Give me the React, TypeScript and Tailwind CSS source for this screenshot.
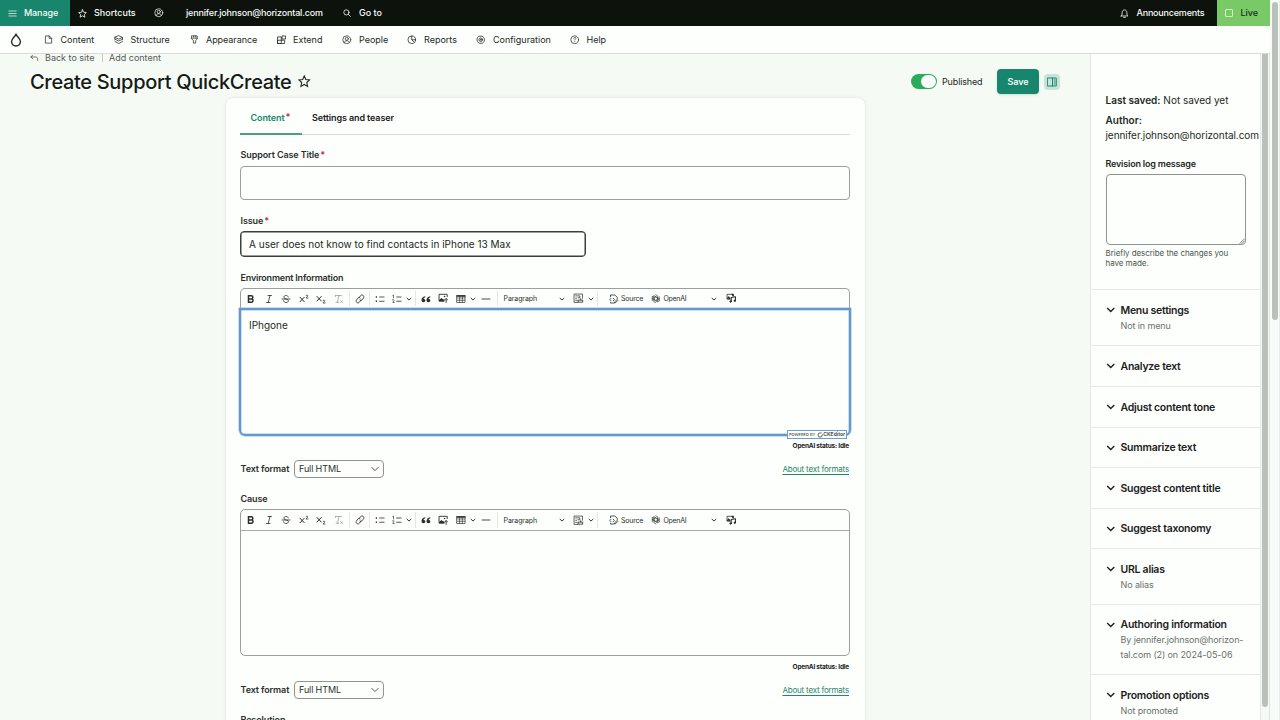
import React from "react";

type IconProps = { className?: string };

function Glyph({ className = "size-[10px]", box = 20, width = 1.6, children }: { className?: string; box?: number; width?: number; children: React.ReactNode }) {
  return (
    <svg viewBox={`0 0 ${box} ${box}`} className={`shrink-0 ${className}`} fill="none" stroke="currentColor" strokeWidth={width} strokeLinecap="round" strokeLinejoin="round">
      {children}
    </svg>
  );
}

const MenuIcon = () => <Glyph className="ml-px size-[9px]"><path d="M1 4.500h18M1 10h18M1 15.500h18" strokeLinecap="butt" /></Glyph>;
const StarIcon = ({ className }: IconProps) => (
  <Glyph className={className} width={1.8}><path d="M10 1.600l2.500 5.600 6 .7-4.400 4.200 1.200 6.100L10 15.200l-5.300 3 1.200-6.100L1.500 7.900l6-.7z" strokeLinejoin="miter" /></Glyph>
);
const UserIcon = () => (
  <Glyph className="size-[9.500px]" width={1.500}><circle cx="10" cy="10" r="8.400" /><circle cx="10" cy="8" r="3.300" /><path d="M4.500 16c.6-2.600 2.600-4 5.500-4s4.900 1.400 5.500 4" /></Glyph>
);
const SearchIcon = () => <Glyph className="ml-px size-[8px]" width={2}><circle cx="8.500" cy="8.500" r="6.500" /><path d="M13.500 13.500l5 5" /></Glyph>;
const BellIcon = () => <Glyph className="size-[9px]" width={1.800}><path d="M2.500 15.500h15c-1.700-1.500-2.200-3-2.200-7C15.300 4.500 13 2 10 2S4.700 4.500 4.700 8.500c0 4-.5 5.500-2.200 7zM8 18.500h4" /></Glyph>;
const FileIcon = () => <Glyph className="ml-[0.500px] size-[9px]" width={1.600}><path d="M4 2h7.500L17 7.500V18H4zM11.500 2v5.500H17" /></Glyph>;
const StackIcon = () => <Glyph className="ml-[0.500px] size-[9.500px]" width={1.600}><path d="M10 1.500l8 3.600-8 3.600-8-3.600zM2 9l8 3.600L18 9M2 13.500l8 4.500 8-4.500M2 5.500V9M18 5.500V9" /></Glyph>;
const BrushIcon = () => <Glyph className="ml-[0.500px] size-[9px]" width={1.600}><path d="M4 2h12v7l-3.500 3v6h-5v-6L4 9zM4 7h12M8 2v2.500M12 2v2.500" /></Glyph>;
const BlocksIcon = () => <Glyph className="ml-[0.500px] size-[9.500px]" width={1.700}><path d="M2 4h7v14H2zM2 11h14v7H2zM11.500 2h6.500v6.500h-6.500z" /></Glyph>;
const PieIcon = () => <Glyph className="size-[9.500px]" width={1.600}><circle cx="10" cy="10" r="8" /><path d="M10 2v8h8M10 10l5 5" /></Glyph>;
const GearIcon = () => (
  <Glyph className="size-[9.500px]" width={1.600}><path d="M7 2.500h6l4 3.500 1 4-1 4-4 3.500H7L3 14l-1-4 1-4z" /><circle cx="10" cy="10" r="3.800" /><circle cx="10" cy="10" r="1" /></Glyph>
);
const HelpIcon = () => <Glyph className="size-[9.500px]" width={1.500}><circle cx="10" cy="10" r="8.300" /><path d="M7.800 7c.2-1.400 1.100-2 2.300-2s2.300.8 2.300 2c0 1.700-2.300 1.800-2.300 3.600M10 14v.3" /></Glyph>;
const Chevron = ({ className = "size-[6px]", width = 3.200 }: IconProps & { width?: number }) => (
  <Glyph className={className} width={width}><path d="M2.500 6.500l7.500 7 7.500-7" strokeLinecap="butt" strokeLinejoin="miter" /></Glyph>
);

function NavItem({ icon, label, className }: { icon: React.ReactNode; label: string; className: string }) {
  return (
    <a className={`flex shrink-0 items-center whitespace-nowrap ${className}`}>
      <span className="flex w-[17px] shrink-0">{icon}</span>
      {label}
    </a>
  );
}

function Required() {
  return <span className="ml-[1px] inline-block -translate-y-[1px] text-[9px] leading-none font-bold tracking-normal text-[#c8324b]">*</span>;
}

function Label({ children, required = false, className = "tracking-[-0.110px]" }: { children: React.ReactNode; required?: boolean; className?: string }) {
  return (
    <div className={`flex h-[12px] items-center text-[9px] font-semibold whitespace-nowrap text-[#2b312d] ${className}`}>
      {children}
      {required && <Required />}
    </div>
  );
}

const Sep = ({ className = "w-[4px]" }: IconProps) => (
  <span className={`flex h-full shrink-0 justify-center py-[2px] ${className}`}><span className="w-px bg-[#e2e8e2]" /></span>
);

function Cell({ className = "w-[17.5px]", children }: { className?: string; children: React.ReactNode }) {
  return <span className={`flex h-full shrink-0 items-center justify-center ${className}`}>{children}</span>;
}

function Toolbar() {
  return (
    <div className="flex h-full items-center pl-[1.500px] text-[7px] whitespace-nowrap text-[#2a2f2b]">
      <Cell><Glyph width={3}><path d="M5 3.500h5.500a3.200 3.200 0 0 1 0 6.400H5zM5 9.900h6.500a3.400 3.400 0 0 1 0 6.600H5z" strokeLinejoin="miter" /></Glyph></Cell>
      <Cell><Glyph><path d="M8 3h7M5 17h7M12 3L8.500 17" /></Glyph></Cell>
      <Cell><Glyph><path d="M14.500 6c-.3-2-2-3-4.300-3-2.600 0-4.400 1.300-4.400 3.300 0 5 9 2.700 9 7.200 0 2-1.900 3.500-4.800 3.500-2.700 0-4.500-1.300-4.800-3.500M2 10h16" /></Glyph></Cell>
      <Cell><Glyph width={2}><path d="M2 6.500l8.500 9M10.500 6.500L2 15.500" /><path d="M14 3.300c.5-1.500 3.700-1.400 3.700.5 0 1.400-3.700 2.500-3.700 4.200h4" strokeWidth={1.500} /></Glyph></Cell>
      <Cell><Glyph width={2}><path d="M2 5l8.500 9M10.500 5L2 14" /><path d="M14 13.300c.5-1.500 3.700-1.400 3.700.5 0 1.400-3.700 2.500-3.700 4.200h4" strokeWidth={1.500} /></Glyph></Cell>
      <Cell><Glyph className="size-[10px] text-[#9ba19c]"><path d="M3 3h12M3 3v2M10 3L7 16.500M4 16.500h5.500M13.500 13.500l3.500 3.500M17 13.500l-3.500 3.500" /></Glyph></Cell>
      <Sep />
      <Cell className="w-[16px]"><Glyph width={1.700}><path d="M8 7.500l3-4c1.500-2 4-2 5.500-.5s1.600 3.500.2 5.300l-2.200 3c-1 1.400-3 1.700-4.500.9M12 12l-3 4.300c-1.500 2-4 2-5.500.5s-1.600-3.500-.2-5.300L5.500 8.500C6.500 7 8.500 6.800 10 7.600" /></Glyph></Cell>
      <Sep />
      <Cell className="w-[16px]"><Glyph width={1.600}><path d="M8.500 6H19M8.500 14.500H19" strokeLinecap="butt" /><path d="M1.500 6h2.500M1.500 14.500h2.500" strokeWidth={3} strokeLinecap="butt" /></Glyph></Cell>
      <Cell className="w-[18px]"><Glyph width={1.600}><path d="M8.500 6H19M8.500 14.500H19" strokeLinecap="butt" /><path d="M1.500 3l1.500-.8V8M1 11.500c2.500-1 4 .7 2.500 2.300L1.500 17H4.500" strokeWidth={1.300} /></Glyph></Cell>
      <Cell className="w-[7px]"><Chevron /></Cell>
      <Sep className="w-[5px]" />
      <Cell className="w-[17px]"><Glyph width={0}><path fill="currentColor" d="M8.500 4.500C4 5 1 8.500 1 12.500 1 15 2.600 16.500 4.800 16.500S8.700 15 8.700 13 7.200 9.800 5.200 9.800C5.500 8.500 6.800 7.200 8.800 6.600zM18.500 4.500C14 5 11 8.500 11 12.500c0 2.500 1.600 4 3.800 4s3.900-1.500 3.900-3.500-1.500-3.200-3.500-3.200c.3-1.300 1.600-2.600 3.600-3.200z" /></Glyph></Cell>
      <Cell className="w-[17px]"><Glyph className="size-[10.500px]" width={1.700}><path d="M11.500 15.500H2v-13h15.500V7M15.500 18v-7M12.500 13.500l3-3 3 3" /><path d="M2 13.500L6.500 9.500l3.500 3L12 11.500V15.500H2z" fill="currentColor" strokeWidth={0} /><circle cx="12.500" cy="6.500" r="1.500" fill="currentColor" strokeWidth={0} /></Glyph></Cell>
      <Cell className="w-[18px]"><Glyph width={1.300}><path d="M2 3h16v14H2zM2 8h16M2 12.500h16M7.300 4v13M12.700 4v13" /><path d="M2 4h16" strokeWidth={3} /></Glyph></Cell>
      <Cell className="w-[7px]"><Chevron /></Cell>
      <Cell className="w-[19px]"><Glyph width={1.700}><path d="M2 10h16" /></Glyph></Cell>
      <Sep />
      <span className="w-[58px] shrink-0 pt-[1.500px] pl-[4px] tracking-[-0.080px]">Paragraph</span>
      <Cell className="w-[8px]"><Chevron /></Cell>
      <Cell className="ml-[5px] w-[16px]"><Glyph className="size-[10.500px]" width={1.400}><path d="M9 18H2V2h16v8M5 5.500h3M5 10h2M5 14h3M9.500 5.500H13v3.500H9.500" /><path d="M10.500 13.500h8v4h-8zM14.500 13v-2" strokeWidth={1.600} /></Glyph></Cell>
      <Cell className="w-[8px]"><Chevron /></Cell>
      <Sep className="w-[6px]" />
      <Cell className="ml-[7px] w-[12px]"><Glyph className="size-[10px]" width={1.600}><path d="M3 5.500V2h8.500l5 4.500V9M4 8.500l-2.500 2.500L4 13.500M8.500 8.500l2.500 2.500-2.500 2.500M3 16.500V18h6.500M17 11.500l1 1-5 5-2 .5.500-2z" /></Glyph></Cell>
      <span className="w-[31px] shrink-0 pt-[1.500px] pl-[1.500px] tracking-[-0.200px]">Source</span>
      <Cell className="w-[11px]"><Glyph className="size-[9.500px]" width={1.300}><path d="M10 1.500l4 2.300v7l-4 2.400-4-2.400v-6M10 18.500l-4-2.300v-7l4-2.400 4 2.400v6M2.600 5.800l4-2.300 6 3.500M17.400 14.200l-4 2.300-6-3.500M2.600 14.200V9.600l6-3.500M17.400 5.800v4.600l-6 3.500M2.600 5.800v4.500l4 2.300M17.400 14.200V9.700l-4-2.300" /></Glyph></Cell>
      <span className="w-[48px] shrink-0 pt-[1.500px] pl-[2px] tracking-[-0.300px]">OpenAI</span>
      <Cell className="w-[8px]"><Chevron /></Cell>
      <Cell className="ml-[5px] w-[17px]"><Glyph className="size-[10.500px]" width={1.500}><path d="M7 11.500H2v-9h11.500V5" /><path d="M2 10.500l3-4 3 3v2z" fill="currentColor" strokeWidth={1} /><path d="M10 16V8.500L18 7v7.500" strokeWidth={2} /><path d="M12 3h1.500v2" strokeWidth={3} /><circle cx="8.700" cy="16.200" r="1.500" fill="currentColor" /><circle cx="16.700" cy="14.700" r="1.500" fill="currentColor" /></Glyph></Cell>
    </div>
  );
}

function FormatRow() {
  return (
    <div className="flex h-[18px] items-center whitespace-nowrap">
      <span className="w-[54px] text-[9px] font-semibold tracking-[-0.110px] text-[#2b312d]">Text format</span>
      <div className="-ml-[0.500px] flex h-[18px] w-[90px] items-center justify-between rounded-[4px] border border-[#8e948f] pr-[4px] pl-[4px] text-[9px] tracking-[-0.120px] text-[#2b312d]">
        Full HTML
        <Glyph className="size-[8px]" width={2}><path d="M2 6l8 8 8-8" /></Glyph>
      </div>
      <a className="mr-[1px] ml-auto text-[8px] tracking-[-0.200px] text-[#26856b] underline underline-offset-[1.500px]">About text formats</a>
    </div>
  );
}

function Panel({ title, lines = [], className }: { title: string; lines?: string[]; className: string }) {
  return (
    <section className={`flex shrink-0 border-t border-[#e6ebe6] pt-[13.500px] pl-[15px] ${className}`}>
      <Chevron className="mt-[1.500px] mr-[5px] size-[9.500px] text-[#1c211e]" width={3} />
      <div className="whitespace-nowrap">
        <h3 className="text-[10.500px] leading-[13px] font-semibold tracking-[-0.260px] text-[#1c211e]">{title}</h3>
        {lines.map((line) => <p key={line} className="text-[9px] leading-[14.600px] tracking-[-0.110px] text-[#6a716c] first-of-type:mt-[2.300px]">{line}</p>)}
      </div>
    </section>
  );
}

export default function App() {
  return (
    <div className="flex h-[720px] w-[1280px] overflow-hidden bg-[#f6faf6] font-['Inter','Liberation_Sans',sans-serif] text-[#232925]">
      <div className="flex w-[1270px] flex-col">
        <header className="flex h-[26px] shrink-0 bg-[#0d120d] text-[9px] font-medium text-[#f8fcf8]">
          <div className="flex w-[70px] items-center bg-[#18866d] pl-[7px] tracking-[-0.100px]"><NavItem icon={<MenuIcon />} label="Manage" className="" /></div>
          <NavItem icon={<StarIcon className="ml-[0.500px] size-[9px]" />} label="Shortcuts" className="ml-[7px] w-[77px]" />
          <span className="flex w-[32px] items-center"><UserIcon /></span>
          <span className="flex w-[156px] items-center tracking-[-0.170px] whitespace-nowrap">jennifer.johnson@horizontal.com</span>
          <NavItem icon={<SearchIcon />} label="Go to" className="" />
          <div className="ml-auto flex w-[97.500px] items-center tracking-[-0.200px]"><NavItem icon={<BellIcon />} label="Announcements" className="" /></div>
          <div className="flex w-[53px] items-center bg-[#79c966] pl-[8px] text-[#16301a]">
            <span className="mr-[7.500px] size-[8px] rounded-[1px] border border-[#d5f5c8]" />Live
          </div>
        </header>
        <nav className="flex h-[28px] shrink-0 items-center border-b border-[#d8ddd8] bg-[#fcfffb] text-[9px]">
          <span className="flex w-[43.500px] pl-[9px]"><Glyph className="size-[14px]" width={2}><path d="M10 1.500c.8 3.500 6.300 6 6.300 10.800a6.300 6.300 0 0 1-12.600 0C3.700 7.500 9.200 5 10 1.500z" /></Glyph></span>
          <NavItem icon={<FileIcon />} label="Content" className="w-[70px]" />
          <NavItem icon={<StackIcon />} label="Structure" className="w-[75.500px]" />
          <NavItem icon={<BrushIcon />} label="Appearance" className="w-[87px] tracking-[-0.050px]" />
          <NavItem icon={<BlocksIcon />} label="Extend" className="w-[66px]" />
          <NavItem icon={<UserIcon />} label="People" className="w-[65px]" />
          <NavItem icon={<PieIcon />} label="Reports" className="w-[69px]" />
          <NavItem icon={<GearIcon />} label="Configuration" className="w-[93.500px]" />
          <NavItem icon={<HelpIcon />} label="Help" className="" />
        </nav>
        <div className="flex min-h-0 flex-1">
          <main className="flex w-[1090px] flex-col bg-[#f5faf5]">
            <div className="flex h-[8px] shrink-0 items-center pl-[30px] text-[9px] leading-[8px] whitespace-nowrap text-[#555c57]">
              <Glyph className="mr-[6.500px] size-[8.500px]" width={2}><path d="M6 3L2 7l4 4M2 7h11c3 0 5 2 5 5v3" /></Glyph>
              <span className="w-[57px]">Back to site</span>
              <span className="mr-[6px] h-[8px] w-px bg-[#c5cac5]" />
              Add content
            </div>
            <div className="flex h-[35px] shrink-0 items-center pt-[4px] pl-[30px] whitespace-nowrap">
              <h1 className="w-[268px] text-[20px] font-medium tracking-[-0.320px] text-[#151a17]">Create Support QuickCreate</h1>
              <StarIcon className="size-[12.500px]" />
              <div className="ml-[600.500px] flex h-[15px] w-[26px] items-center justify-end rounded-full bg-[#2cab5d] pr-px"><span className="h-[13px] w-[15px] rounded-full bg-[#fcfffb]" /></div>
              <span className="ml-[5px] w-[55px] text-[9px] tracking-[-0.150px]">Published</span>
              <button className="h-[25px] w-[42px] rounded-[4px] bg-[#18866d] text-[9px] font-semibold tracking-[-0.100px] text-[#effaf4] shadow-sm">Save</button>
              <span className="ml-[5px] flex size-[16px] items-center justify-center rounded-[4px] bg-[#c8e3d8] text-[#18866d]"><Glyph className="size-[10px]" width={2}><path d="M1.500 2h17v16h-17zM11 2v16M14.500 6h1.500M14.500 10h1.500M14.500 14h1.500" /></Glyph></span>
            </div>
            <div className="ml-[225px] flex h-[700px] w-[641px] flex-col rounded-t-[8px] border border-[#e8ede8] bg-[#fcfffb] pr-[15px] pl-[14px] shadow-[0_0_4px_rgba(0,40,0,0.03)]">
              <div className="flex h-[37px] shrink-0 border-b border-[#d5dbd6] text-[9px] font-semibold tracking-[-0.110px] whitespace-nowrap">
                <span className="-mb-px flex h-[37px] w-[62px] items-center border-b-2 border-[#4f9c88] pt-[4px] pl-[10.500px] text-[#18866d]">Content<Required /></span>
                <span className="flex h-[37px] items-center pt-[2px] pl-[10px] text-[#1c211e]">Settings and teaser</span>
              </div>
              <div className="mt-[14px] pl-[0.500px]"><Label required>Support Case Title</Label></div>
              <div className="mt-[5px] h-[34px] shrink-0 rounded-[4px] border border-[#9aa09b]" />
              <div className="mt-[15px] pl-[0.500px]"><Label required>Issue</Label></div>
              <div className="mt-[4px] flex h-[26px] w-[346px] shrink-0 items-center rounded-[4px] border border-[#3a403c] pl-[8px] text-[10px] whitespace-nowrap shadow-[inset_0_0_0_0.500px_#3a403c]">A user does not know to find contacts in iPhone 13 Max</div>
              <div className="mt-[15px] pl-[0.500px]"><Label className="tracking-[-0.200px]">Environment Information</Label></div>
              <div className="mt-[4px] h-[20px] shrink-0 rounded-t-[5px] border border-b-0 border-[#9aa09b]"><Toolbar /></div>
              <div className="-mx-px flex h-[128px] shrink-0 flex-col justify-between rounded-b-[6px] border-2 border-[#6199cf] pt-[8px] pl-[8px] text-[10px] shadow-[0_0_0_0.500px_#9bbfe0,inset_0_0_0_0.500px_#9bbfe0]">
                IPhgone
                <span className="mr-[2px] -mb-[5px] flex h-[9px] w-[60px] items-center justify-center gap-[2px] self-end border border-[#6a9fce] bg-[#fcfffb] text-[4px] font-medium whitespace-nowrap text-[#4b514d]">
                  POWERED BY
                  <span className="flex items-center text-[5px] font-bold"><Glyph className="size-[6px]" width={3}><path d="M14 3L6 4 3 10l4 7 8-1 3-7" /></Glyph>CKEditor</span>
                </span>
              </div>
              <div className="mt-[6px] h-[8px] pr-[1px] text-right text-[6.500px] leading-[8px] font-bold tracking-[-0.210px] text-[#1c211e]">OpenAI status: Idle</div>
              <div className="mt-[10px] pl-[0.500px]"><FormatRow /></div>
              <div className="mt-[15px] pl-[0.500px]"><Label>Cause</Label></div>
              <div className="mt-[4px] flex h-[147px] shrink-0 flex-col rounded-[5px] border border-[#9aa09b]">
                <div className="h-[21px] shrink-0 border-b border-[#a5aba6]"><Toolbar /></div>
              </div>
              <div className="mt-[7px] h-[8px] pr-[1px] text-right text-[6.500px] leading-[8px] font-bold tracking-[-0.210px] text-[#1c211e]">OpenAI status: Idle</div>
              <div className="mt-[10px] pl-[0.500px]"><FormatRow /></div>
              <div className="mt-[15px] pl-[0.500px]"><Label>Resolution</Label></div>
            </div>
          </main>
          <aside className="flex w-[170.500px] shrink-0 flex-col border-x border-[#e3e8e3] bg-[#fcfffb] whitespace-nowrap">
            <div className="h-[235px] shrink-0 pt-[39px] pl-[14.500px] text-[10px] leading-[15px]">
              <p><b className="font-semibold">Last saved:</b> Not saved yet</p>
              <p className="mt-[5px] font-semibold">Author:</p>
              <p className="tracking-[-0.050px]">jennifer.johnson@horizontal.com</p>
              <p className="mt-[15px] text-[9px] leading-[12px] font-semibold tracking-[-0.200px]">Revision log message</p>
              <div className="mt-[4px] flex h-[71px] w-[140px] items-end justify-end rounded-[4px] border border-[#8e948f]"><Glyph className="size-[6px]" width={2}><path d="M3 18L18 3M10 18l8-8" /></Glyph></div>
              <p className="mt-[3px] text-[8px] leading-[10px] tracking-[-0.060px] text-[#4d534f]">Briefly describe the changes you<br />have made.</p>
            </div>
            <Panel title="Menu settings" lines={["Not in menu"]} className="h-[56px]" />
            <Panel title="Analyze text" className="h-[41px]" />
            <Panel title="Adjust content tone" className="h-[40.500px]" />
            <Panel title="Summarize text" className="h-[40.500px]" />
            <Panel title="Suggest content title" className="h-[40.500px]" />
            <Panel title="Suggest taxonomy" className="h-[40.500px]" />
            <Panel title="URL alias" lines={["No alias"]} className="h-[55.500px]" />
            <Panel title="Authoring information" lines={["By jennifer.johnson@horizon-", "tal.com (2) on 2024-05-06"]} className="h-[70.500px]" />
            <Panel title="Promotion options" lines={["Not promoted"]} className="h-[56px]" />
          </aside>
          <div className="flex flex-1 justify-center border-r border-[#dfe4df]"><span className="h-[653px] w-[5.500px] rounded-b-full bg-[#bac1bb]" /></div>
        </div>
      </div>
      <div className="flex w-[10px] justify-center border-r border-[#e8ede8] bg-[#f8fcf8] pt-[2px] pl-px"><span className="h-[318px] w-[5.500px] rounded-full bg-[#bac1bb]" /></div>
    </div>
  );
}
